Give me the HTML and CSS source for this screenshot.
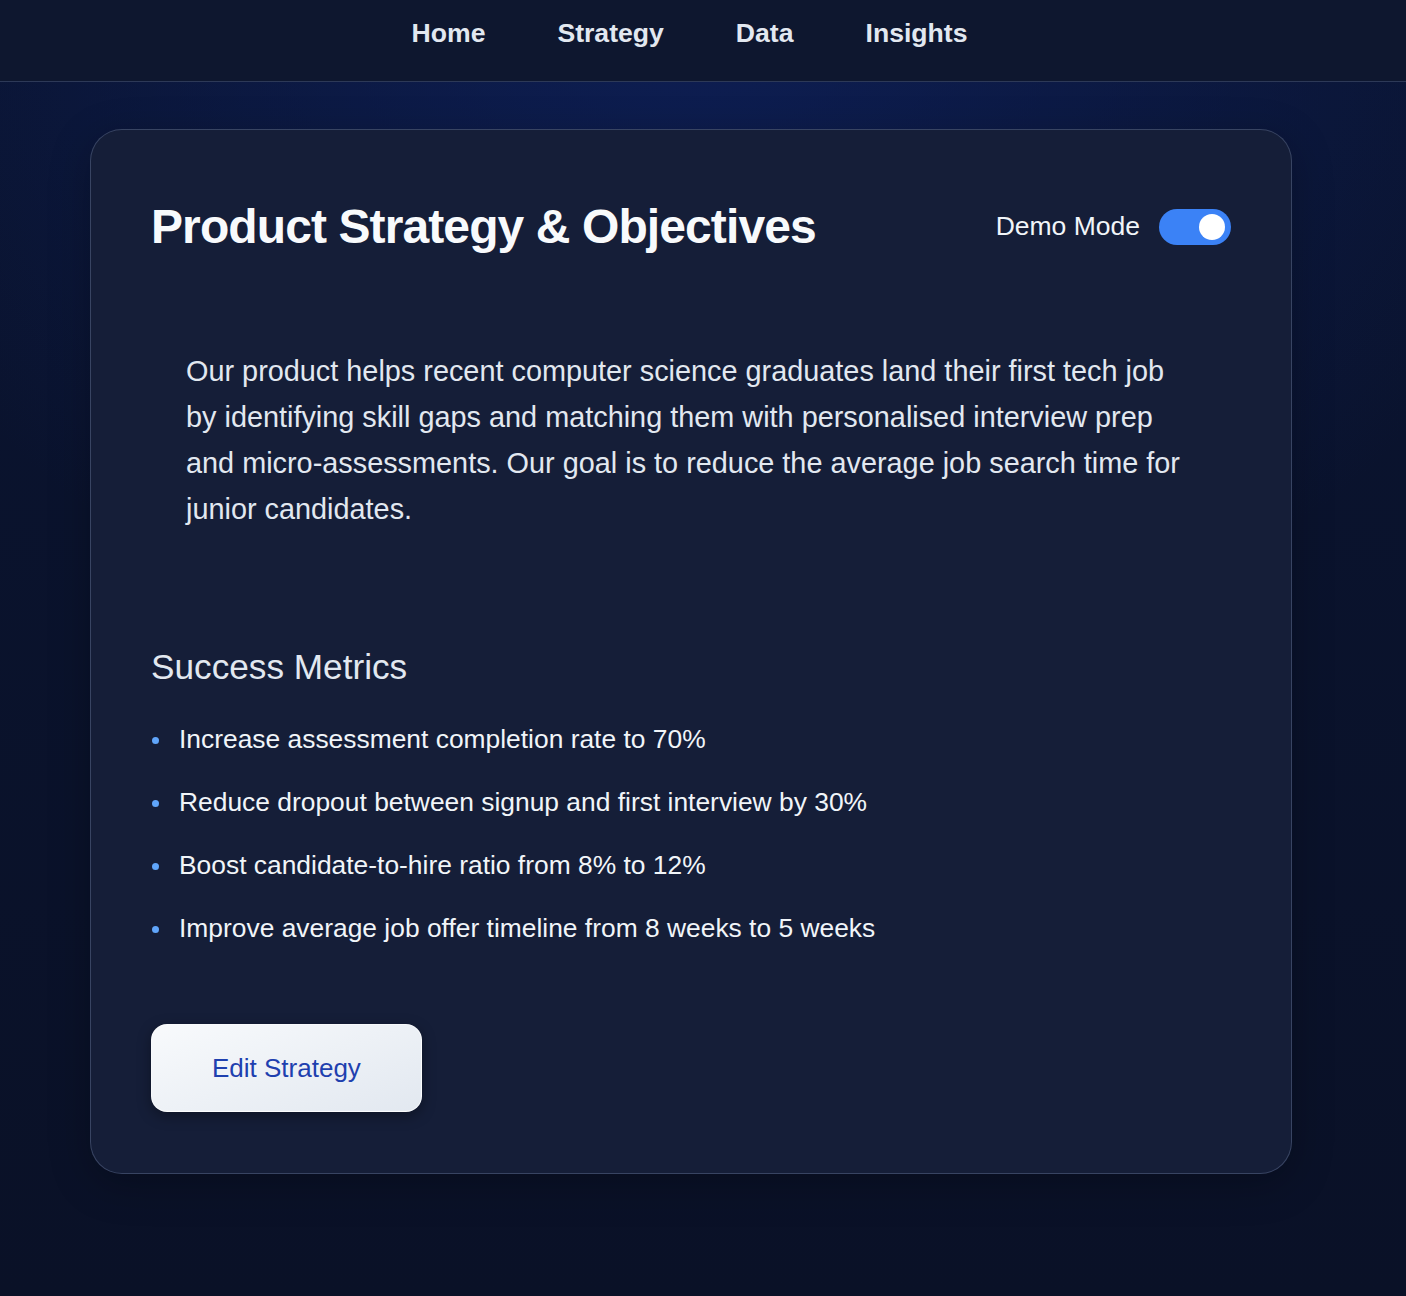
FILE: index.html
```html
<!DOCTYPE html>
<html lang="en">
<head>
<meta charset="utf-8">
<title>Product Strategy</title>
<link rel="stylesheet" href="styles.css">
</head>
<body>
<nav class="topnav">
  <a class="nav-link" href="#">Home</a>
  <a class="nav-link" href="#">Strategy</a>
  <a class="nav-link" href="#">Data</a>
  <a class="nav-link" href="#">Insights</a>
</nav>
<main class="page">
  <section class="card">
    <header class="card-head">
      <h1 class="title">Product Strategy &amp; Objectives</h1>
      <div class="demo">
        <span class="demo-label">Demo Mode</span>
        <span class="toggle"><span class="knob"></span></span>
      </div>
    </header>
    <p class="summary">Our product helps recent computer science graduates land their first tech job by identifying skill gaps and matching them with personalised interview prep and micro-assessments. Our goal is to reduce the average job search time for junior candidates.</p>
    <h2 class="metrics-title">Success Metrics</h2>
    <ul class="metrics">
      <li>Increase assessment completion rate to 70%</li>
      <li>Reduce dropout between signup and first interview by 30%</li>
      <li>Boost candidate-to-hire ratio from 8% to 12%</li>
      <li>Improve average job offer timeline from 8 weeks to 5 weeks</li>
    </ul>
    <button class="edit-btn" type="button">Edit Strategy</button>
  </section>
</main>
</body>
</html>
```
FILE: styles.css
```css
* { box-sizing: border-box; }
html, body { margin: 0; padding: 0; }
body {
  min-height: 1296px;
  font-family: "Liberation Sans", Arial, sans-serif;
  color: #f1f5f9;
  background-color: #0a1127;
  background-image:
    radial-gradient(ellipse 900px 700px at 50% 0%, rgba(14, 32, 90, 0.85), rgba(14, 32, 90, 0) 100%),
    linear-gradient(180deg, #0a1431 0%, #0a1127 100%);
}
.topnav {
  height: 82px;
  display: flex;
  justify-content: center;
  align-items: flex-start;
  gap: 72px;
  padding: 18px 27px 0 0;
  background: #0e172f;
  border-bottom: 1px solid rgba(71, 85, 120, 0.55);
}
.nav-link {
  color: #e2e8f0;
  text-decoration: none;
  font-weight: 700;
  font-size: 26.6px;
  line-height: 30px;
}
.page {
  padding: 47px 114px 0 90px;
}
.card {
  width: 1202px;
  border: 1px solid rgba(100, 116, 150, 0.45);
  border-radius: 32px;
  background: #151e38;
  padding: 60px 60px 61px;
  box-shadow: 0 10px 40px rgba(0, 0, 0, 0.25);
}
.card-head {
  display: flex;
  justify-content: space-between;
  align-items: center;
  padding-top: 8px;
}
.title {
  margin: 0;
  font-size: 48px;
  line-height: 57.6px;
  font-weight: 700;
  letter-spacing: -0.9px;
  color: #f8fafc;
}
.demo {
  display: flex;
  align-items: center;
  gap: 19px;
}
.demo-label {
  font-size: 26.5px;
  color: #f1f5f9;
}
.toggle {
  width: 72px;
  height: 36px;
  border-radius: 18px;
  background: #3b82f6;
  display: flex;
  align-items: center;
  justify-content: flex-end;
  padding-right: 6px;
}
.knob {
  width: 26px;
  height: 26px;
  border-radius: 50%;
  background: #ffffff;
}
.summary {
  margin: 92px 0 0;
  padding: 0 35px;
  font-size: 28.85px;
  line-height: 46.08px;
  color: #e2e8f0;
}
.metrics-title {
  margin: 114px 0 0;
  font-size: 35.2px;
  line-height: 42.24px;
  font-weight: 400;
  color: #e2e8f0;
}
.metrics {
  list-style: none;
  margin: 30px 0 0;
  padding: 0;
}
.metrics li {
  position: relative;
  padding-left: 28px;
  font-size: 26.4px;
  line-height: 42px;
  margin-bottom: 21px;
  color: #f1f5f9;
}
.metrics li:last-child {
  margin-bottom: 0;
}
.metrics li::before {
  content: "";
  position: absolute;
  left: 1px;
  top: 19px;
  width: 7px;
  height: 7px;
  border-radius: 50%;
  background: #60a5fa;
}
.edit-btn {
  display: block;
  margin-top: 75px;
  padding: 27px 60px;
  font-family: "Liberation Sans", Arial, sans-serif;
  font-size: 26px;
  line-height: 32px;
  color: #1e40af;
  border: 1px solid rgba(255, 255, 255, 0.7);
  border-radius: 16px;
  background: linear-gradient(160deg, #f8fafc 0%, #e2e8f0 100%);
  box-shadow: 0 4px 14px rgba(0, 0, 0, 0.35);
  cursor: pointer;
}
```
